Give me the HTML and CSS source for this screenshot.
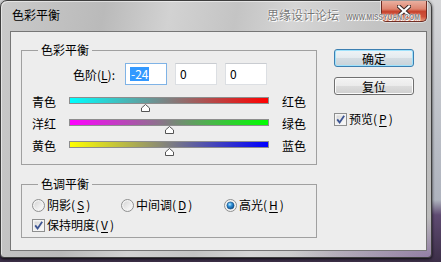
FILE: index.html
```html
<!DOCTYPE html>
<html>
<head>
  <title>色彩平衡</title>
  <link rel="stylesheet" href="styles.css">
</head>
<body>

  <svg class="defs" width="0" height="0">
    <defs>
      <radialGradient id="dot" cx="40%" cy="35%" r="65%">
        <stop offset="0" stop-color="#b9ecff"/>
        <stop offset="0.45" stop-color="#2f8fd8"/>
        <stop offset="1" stop-color="#0b4f8e"/>
      </radialGradient>
      <linearGradient id="well" x1="0" y1="0" x2="1" y2="1">
        <stop offset="0" stop-color="#d6d6d6"/>
        <stop offset="1" stop-color="#fbfbfb"/>
      </linearGradient>
    </defs>
  </svg>

  <div class="window">
    <div class="titlebar">
      <span class="title">色彩平衡</span>
      <span class="close">
        <svg width="14" height="12" viewBox="0 0 14 12">
          <path d="M2 1.5 L12 10.5 M12 1.5 L2 10.5" stroke="#3b2a28" stroke-width="4.2" stroke-linecap="square"/>
          <path d="M2 1.5 L12 10.5 M12 1.5 L2 10.5" stroke="#fff" stroke-width="2.2" stroke-linecap="square"/>
        </svg>
      </span>
    </div>
    <div class="watermark"><span class="wm-cn">思缘设计论坛</span><span class="wm-en">WWW.MISSYUAN.COM</span></div>

    <div class="client">
      <div class="left">
        <fieldset class="group">
          <legend>色彩平衡</legend>
          <div class="levels">
            <span class="levels-label">色阶(<u>L</u>):</span>
            <span class="field focus"><span class="sel">-24</span></span>
            <span class="field">0</span>
            <span class="field">0</span>
          </div>

          <div class="slider-row">
            <span class="side">青色</span>
            <div class="track">
              <div class="bar cyan-red"></div>
              <svg class="thumb" style="left:72px" width="9" height="8" viewBox="0 0 9 8"><path d="M0.5 7.5 V4 L4.5 0.5 L8.5 4 V7.5 Z" fill="#fff" stroke="#555"/></svg>
            </div>
            <span class="side end">红色</span>
          </div>
          <div class="slider-row">
            <span class="side">洋红</span>
            <div class="track">
              <div class="bar magenta-green"></div>
              <svg class="thumb" style="left:96px" width="9" height="8" viewBox="0 0 9 8"><path d="M0.5 7.5 V4 L4.5 0.5 L8.5 4 V7.5 Z" fill="#fff" stroke="#555"/></svg>
            </div>
            <span class="side end">绿色</span>
          </div>
          <div class="slider-row">
            <span class="side">黄色</span>
            <div class="track">
              <div class="bar yellow-blue"></div>
              <svg class="thumb" style="left:96px" width="9" height="8" viewBox="0 0 9 8"><path d="M0.5 7.5 V4 L4.5 0.5 L8.5 4 V7.5 Z" fill="#fff" stroke="#555"/></svg>
            </div>
            <span class="side end">蓝色</span>
          </div>
        </fieldset>

        <fieldset class="group tone">
          <legend>色调平衡</legend>
          <div class="radios">
            <label class="opt">
              <svg width="13" height="13" viewBox="0 0 13 13"><circle cx="6.5" cy="6.5" r="6" fill="#f2f2f2" stroke="#8e8f8f"/><circle cx="6.5" cy="6.5" r="4.2" fill="url(#well)"/></svg>
              阴影(<u>S</u>)
            </label>
            <label class="opt">
              <svg width="13" height="13" viewBox="0 0 13 13"><circle cx="6.5" cy="6.5" r="6" fill="#f2f2f2" stroke="#8e8f8f"/><circle cx="6.5" cy="6.5" r="4.2" fill="url(#well)"/></svg>
              中间调(<u>D</u>)
            </label>
            <label class="opt">
              <svg width="13" height="13" viewBox="0 0 13 13"><circle cx="6.5" cy="6.5" r="6" fill="#f2f2f2" stroke="#8e8f8f"/><circle cx="6.5" cy="6.5" r="3.6" fill="url(#dot)" stroke="#1c5180" stroke-width="0.6"/></svg>
              高光(<u>H</u>)
            </label>
          </div>
          <label class="opt check-row">
            <svg width="13" height="13" viewBox="0 0 13 13"><rect x="0.5" y="0.5" width="12" height="12" fill="#f4f4f4" stroke="#8e8f8f"/><rect x="2.5" y="2.5" width="8" height="8" fill="url(#well)"/><path d="M3.2 6.4 L5.6 9.4 L10.2 2.8" fill="none" stroke="#3d5593" stroke-width="1.8"/></svg>
            保持明度(<u>V</u>)
          </label>
        </fieldset>
      </div>

      <div class="right">
        <button class="btn default">确定</button>
        <button class="btn">复位</button>
        <label class="opt">
          <svg width="13" height="13" viewBox="0 0 13 13"><rect x="0.5" y="0.5" width="12" height="12" fill="#f4f4f4" stroke="#8e8f8f"/><rect x="2.5" y="2.5" width="8" height="8" fill="url(#well)"/><path d="M3.2 6.4 L5.6 9.4 L10.2 2.8" fill="none" stroke="#3d5593" stroke-width="1.8"/></svg>
          预览(<u>P</u>)
        </label>
      </div>
    </div>
  </div>

</body>
</html>
```
FILE: styles.css
```css
body {
  margin: 0;
  width: 441px;
  height: 262px;
  overflow: hidden;
  font-family: "Noto Sans CJK SC", "Noto Sans", sans-serif;
  font-size: 12px;
  color: #000;
  background: linear-gradient(to bottom, #d6d7d9 0, #c3c6cc 90px, #aeb3be 200px, #5f4b72 215px, #3c2f48 262px);
}

.defs {
  position: absolute;
}

u {
  text-decoration-thickness: 1px;
  text-underline-offset: 2px;
}

/* window frame */
.window {
  position: relative;
  box-sizing: border-box;
  width: 432px;
  height: 258px;
  padding: 0 4px 6px 9px;
  border: 1px solid #3e3e3e;
  border-radius: 7px 7px 4px 4px;
  background:
    radial-gradient(140px 40px at 100% 100%, rgba(120, 85, 150, 0.6), rgba(120, 85, 150, 0)),
    linear-gradient(100deg, #cacaca 0%, #bababa 22%, #d2d2d2 36%, #c4c4c4 50%, #d5d5d5 62%, #c3c3c3 80%, #bbbbbb 100%);
  box-shadow: 0 1px 3px rgba(0, 0, 0, 0.85), inset 1px 1px 0 rgba(255, 255, 255, 0.5);
}

.titlebar {
  display: flex;
  align-items: flex-start;
  height: 30px;
}

.title {
  padding: 6px 0 0 2px;
  line-height: 16px;
}

.close {
  display: flex;
  align-items: center;
  justify-content: center;
  box-sizing: border-box;
  width: 46px;
  height: 21px;
  margin-left: auto;
  border: 1px solid #6d2b22;
  border-top: none;
  border-radius: 0 0 5px 5px;
  background: linear-gradient(#eab0a0 0%, #de8570 40%, #c8452f 52%, #cf513b 78%, #e49479 100%);
  box-shadow: 0 0 0 1px rgba(255, 255, 255, 0.45);
}

.watermark {
  position: absolute;
  left: 266px;
  top: 6px;
  display: flex;
  align-items: baseline;
  white-space: nowrap;
  color: #777;
  text-shadow: 0 0 1px #fff, 0 0 2px #fff, 1px 1px 0 #fff;
}

.wm-cn {
  line-height: 16px;
}

.wm-en {
  display: inline-block;
  margin-left: 7px;
  font-family: "Liberation Sans", Arial, sans-serif;
  font-size: 9px;
  font-weight: bold;
  color: #808080;
  transform: scaleX(0.75);
  transform-origin: left;
}

/* dialog body */
.client {
  display: flex;
  align-items: flex-start;
  box-sizing: border-box;
  width: 417px;
  height: 220px;
  padding: 11px 0 0 10px;
  border: 1px solid #767676;
  background: #ededed;
}

.left {
  width: 296px;
}

.group {
  box-sizing: border-box;
  width: 296px;
  min-inline-size: 0;
  margin: 0;
  padding: 6px 0 4px 10px;
  border: 1px solid #a0a0a0;
}

.group legend {
  margin-left: 6px;
  padding: 0 3px;
  line-height: 14px;
}

.tone {
  margin-top: 12px;
}

.levels {
  display: flex;
  align-items: center;
  height: 22px;
  margin-bottom: 9px;
}

.levels-label {
  width: 83px;
  margin-right: 10px;
  text-align: right;
}

.field {
  box-sizing: border-box;
  width: 42px;
  height: 22px;
  margin-right: 8px;
  padding-left: 4px;
  border: 1px solid #dcdfe3;
  border-top-color: #c9ccd1;
  background: #fff;
  line-height: 20px;
}

.field.focus {
  border-color: #7fb3e6;
}

.sel {
  display: inline-block;
  padding: 0 1px;
  line-height: 14px;
  background: #3399ff;
  color: #fff;
}

.slider-row {
  display: flex;
  align-items: flex-start;
  height: 22px;
}

.side {
  width: 37px;
  line-height: 16px;
}

.side.end {
  width: auto;
  margin-left: 13px;
}

.track {
  position: relative;
  width: 200px;
  height: 22px;
  padding-top: 3px;
  box-sizing: border-box;
}

.bar {
  box-sizing: border-box;
  height: 7px;
  border: 1px solid #8d8d8d;
}

.cyan-red {
  background: linear-gradient(to right, #00ffff, #ff0000);
}

.magenta-green {
  background: linear-gradient(to right, #ff00ff, #00ff00);
}

.yellow-blue {
  background: linear-gradient(to right, #ffff00, #0000ff);
}

.thumb {
  position: absolute;
  top: 10px;
}

.radios {
  display: grid;
  grid-template-columns: 89px 103px auto;
  height: 16px;
}

.opt {
  display: flex;
  align-items: center;
  gap: 2px;
  height: 16px;
  line-height: 16px;
}

.check-row {
  margin-top: 4px;
}

/* buttons column */
.right {
  display: flex;
  flex-direction: column;
  margin-left: 17px;
  padding-top: 6px;
}

.btn {
  box-sizing: border-box;
  width: 80px;
  height: 18px;
  margin: 0 0 10px;
  padding: 0;
  border: 1px solid #707070;
  border-radius: 3px;
  background: linear-gradient(#f3f3f3 0%, #ebebeb 48%, #dcdcdc 52%, #cfcfcf 100%);
  box-shadow: inset 0 0 0 1px #fbfbfb;
  font-family: inherit;
  font-size: 12px;
  line-height: 15px;
  color: #000;
}

.btn.default {
  border-color: #3c7fb1;
  box-shadow: inset 0 0 0 1px #9fe2fb;
  background: linear-gradient(#eef4f7 0%, #e4ebef 48%, #d4dde3 52%, #c9d3d9 100%);
}

.right .opt {
  margin-top: 6px;
}
```
